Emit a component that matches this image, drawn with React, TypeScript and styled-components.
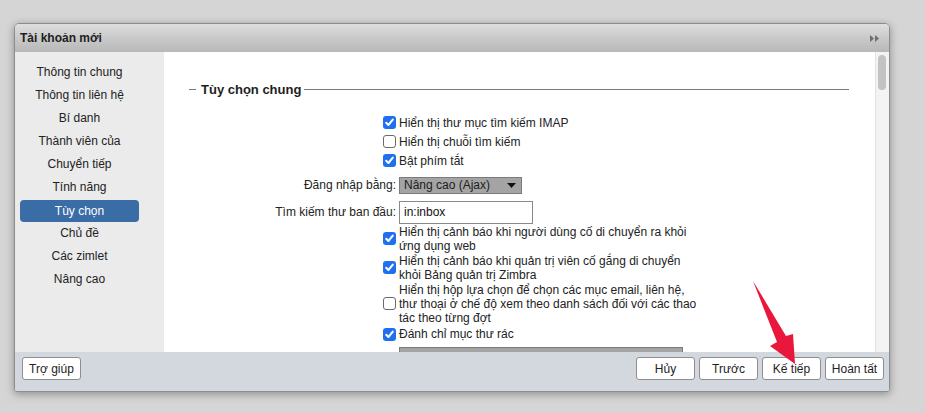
import React from 'react';
import styled, { createGlobalStyle, css } from 'styled-components';

const GlobalStyle = createGlobalStyle`
  html, body {
    margin: 0;
    padding: 0;
  }
  body {
    background: #d5d5d5;
    font-family: 'Liberation Sans', Arial, sans-serif;
    font-size: 12px;
    color: #222;
  }
  * {
    box-sizing: border-box;
  }
`;

const Stage = styled.div`
  position: relative;
  width: 925px;
  height: 413px;
  padding: 23px 0 0 14px;
  overflow: hidden;
`;

const Dialog = styled.section`
  width: 876px;
  height: 369px;
  display: flex;
  flex-direction: column;
  border: 1px solid #8c8c8c;
  border-radius: 5px 5px 3px 3px;
  box-shadow: 0 2px 9px rgba(0, 0, 0, 0.35);
  background: #fff;
  overflow: hidden;
`;

const TitleBar = styled.header`
  height: 28px;
  flex: none;
  display: flex;
  align-items: center;
  justify-content: space-between;
  padding: 0 9px 0 5px;
  background: linear-gradient(to bottom, #dedede, #c9c9c9 50%, #b8b8b8);
  font-weight: bold;
  font-size: 12px;
  color: #1e1e1e;
`;

const Body = styled.div`
  height: 300px;
  flex: none;
  display: flex;
`;

const Sidebar = styled.nav`
  width: 149px;
  flex: none;
  background: #ebebeb;
  padding: 9px 0 0 5px;
`;

const NavItem = styled.div<{ $active?: boolean }>`
  width: 119px;
  height: 23px;
  line-height: 23px;
  text-align: center;
  font-size: 12px;
  color: #222;
  border-radius: 4px;
  ${({ $active }) =>
    $active &&
    css`
      background: #3a6da6;
      color: #fff;
      height: 22px;
      line-height: 22px;
      margin: 1px 0 0;
    `}
`;

const Content = styled.main`
  flex: 1;
  overflow: hidden;
  background: #fff;
  padding: 29px 26px 0 25px;
`;

const LegendRow = styled.div`
  display: flex;
  align-items: center;
  height: 16px;
  margin-bottom: 16px;
`;

const LegendLine = styled.span<{ $grow?: boolean }>`
  height: 1px;
  background: #7a7a7a;
  width: 7px;
  ${({ $grow }) =>
    $grow &&
    css`
      flex: 1;
    `}
`;

const LegendText = styled.span`
  font-weight: bold;
  font-size: 13px;
  color: #1e1e1e;
  margin: 0 3px 0 5px;
`;

const Row = styled.div<{ $h: number; $top?: number }>`
  display: grid;
  grid-template-columns: 207px 1fr;
  column-gap: 3px;
  align-items: center;
  height: ${({ $h }) => $h}px;
  margin-top: ${({ $top }) => $top ?? 0}px;
`;

const FieldLabel = styled.div`
  justify-self: end;
  font-size: 12px;
  color: #222;
  white-space: nowrap;
`;

const OptionText = styled.div`
  font-size: 12px;
  line-height: 14px;
  color: #222;
  white-space: nowrap;
`;

const Box = styled.span<{ $checked?: boolean }>`
  justify-self: end;
  width: 13px;
  height: 13px;
  border-radius: 3px;
  display: flex;
  align-items: center;
  justify-content: center;
  ${({ $checked }) =>
    $checked
      ? css`
          background: #1f6ff1;
        `
      : css`
          background: #fff;
          border: 1px solid #6a6a6a;
        `}
`;

const SelectBox = styled.div<{ $w: number; $h: number }>`
  width: ${({ $w }) => $w}px;
  height: ${({ $h }) => $h}px;
  background: #a4a4a4;
  border: 1px solid #7b7b7b;
  display: flex;
  align-items: center;
  justify-content: space-between;
  padding: 0 5px 0 4px;
  font-size: 12px;
  color: #1c1c1c;
`;

const TextField = styled.div`
  width: 134px;
  height: 23px;
  border: 1px solid #8a8a8a;
  background: #fff;
  display: flex;
  align-items: center;
  padding-left: 4px;
  font-size: 12px;
  color: #111;
`;

const Scrollbar = styled.div`
  width: 14px;
  flex: none;
  background: #f3f3f3;
  border-left: 1px solid #e2e2e2;
  padding-top: 3px;
`;

const Thumb = styled.div`
  width: 8px;
  height: 35px;
  margin-left: 2px;
  border-radius: 4px;
  background: #c3c3c3;
`;

const Footer = styled.footer`
  flex: 1;
  display: flex;
  justify-content: space-between;
  align-items: flex-start;
  padding: 5px 5px 0 7px;
  background: #d3d7de;
`;

const ButtonGroup = styled.div`
  display: flex;
  gap: 4px;
`;

const Button = styled.button`
  width: 59px;
  height: 23px;
  padding: 0;
  background: #fff;
  border: 1px solid #8e8e8e;
  border-radius: 3px;
  font-family: 'Liberation Sans', Arial, sans-serif;
  font-size: 12px;
  color: #222;
`;

const Overlay = styled.svg`
  position: absolute;
  left: 0;
  top: 0;
  pointer-events: none;
`;

const Check = ({ checked }: { checked?: boolean }) => (
  <Box $checked={checked}>
    {checked && (
      <svg width='11' height='11' viewBox='0 0 11 11'>
        <path
          d='M2.2 5.8 L4.4 8 L8.8 2.6'
          fill='none'
          stroke='#fff'
          strokeWidth='2'
          strokeLinecap='round'
          strokeLinejoin='round'
        />
      </svg>
    )}
  </Box>
);

const Caret = () => (
  <svg width='9' height='5' viewBox='0 0 9 5'>
    <path d='M0 0 H9 L4.5 5 Z' fill='#111' />
  </svg>
);

const navItems = [
  'Thông tin chung',
  'Thông tin liên hệ',
  'Bí danh',
  'Thành viên của',
  'Chuyển tiếp',
  'Tính năng',
  'Tùy chọn',
  'Chủ đề',
  'Các zimlet',
  'Nâng cao',
];

const App: React.FC = () => {
  return (
    <>
      <GlobalStyle />
      <Stage>
        <Dialog>
          <TitleBar>
            Tài khoản mới
            <svg width='10' height='7' viewBox='0 0 10 7'>
              <path d='M0 0 L4 3.5 L0 7 Z M5 0 L9 3.5 L5 7 Z' fill='#6e6e6e' />
            </svg>
          </TitleBar>
          <Body>
            <Sidebar>
              {navItems.map((item) => (
                <NavItem key={item} $active={item === 'Tùy chọn'}>
                  {item}
                </NavItem>
              ))}
            </Sidebar>
            <Content>
              <LegendRow>
                <LegendLine />
                <LegendText>Tùy chọn chung</LegendText>
                <LegendLine $grow />
              </LegendRow>
              <Row $h={19}>
                <Check checked />
                <OptionText>Hiển thị thư mục tìm kiếm IMAP</OptionText>
              </Row>
              <Row $h={19}>
                <Check />
                <OptionText>Hiển thị chuỗi tìm kiếm</OptionText>
              </Row>
              <Row $h={19}>
                <Check checked />
                <OptionText>Bật phím tắt</OptionText>
              </Row>
              <Row $h={30}>
                <FieldLabel>Đăng nhập bằng:</FieldLabel>
                <SelectBox $w={123} $h={17}>
                  Nâng cao (Ajax)
                  <Caret />
                </SelectBox>
              </Row>
              <Row $h={24}>
                <FieldLabel>Tìm kiếm thư ban đầu:</FieldLabel>
                <TextField>in:inbox</TextField>
              </Row>
              <Row $h={29}>
                <Check checked />
                <OptionText>
                  Hiển thị cảnh báo khi người dùng cố di chuyển ra khỏi
                  <br />
                  ứng dụng web
                </OptionText>
              </Row>
              <Row $h={29}>
                <Check checked />
                <OptionText>
                  Hiển thị cảnh báo khi quản trị viên cố gắng di chuyển
                  <br />
                  khỏi Bảng quản trị Zimbra
                </OptionText>
              </Row>
              <Row $h={43}>
                <Check />
                <OptionText>
                  Hiển thị hộp lựa chọn để chọn các mục email, liên hệ,
                  <br />
                  thư thoại ở chế độ xem theo danh sách đối với các thao
                  <br />
                  tác theo từng đợt
                </OptionText>
              </Row>
              <Row $h={18}>
                <Check checked />
                <OptionText>Đánh chỉ mục thư rác</OptionText>
              </Row>
              <Row $h={20} $top={4}>
                <FieldLabel>Ngôn ngữ:</FieldLabel>
                <SelectBox $w={284} $h={20} />
              </Row>
            </Content>
            <Scrollbar>
              <Thumb />
            </Scrollbar>
          </Body>
          <Footer>
            <Button>Trợ giúp</Button>
            <ButtonGroup>
              <Button>Hủy</Button>
              <Button>Trước</Button>
              <Button>Kế tiếp</Button>
              <Button>Hoàn tất</Button>
            </ButtonGroup>
          </Footer>
        </Dialog>
        <Overlay width='925' height='413' viewBox='0 0 925 413'>
          <path
            d='M753 281 L786 336 L793 334 L795 364 L770 346 L777 342 Z'
            fill='#ea173c'
          />
        </Overlay>
      </Stage>
    </>
  );
};

export default App;
